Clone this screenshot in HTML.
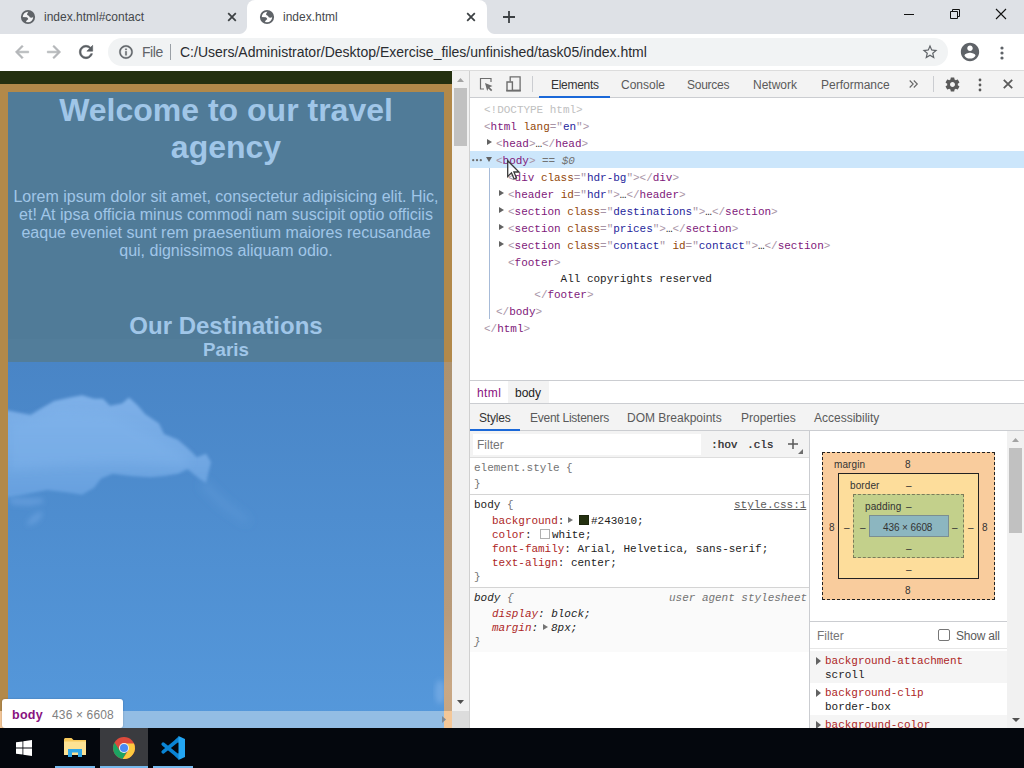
<!DOCTYPE html>
<html lang="en">
<head>
<meta charset="utf-8">
<title>index.html</title>
<style>
*{box-sizing:border-box;margin:0;padding:0}
html,body{width:1024px;height:768px;overflow:hidden;background:#fff}
body{position:relative;font-family:"Liberation Sans",sans-serif;font-size:12px;color:#333;line-height:1}
.a{position:absolute;white-space:pre}
svg{position:absolute;overflow:visible}
/* ---------- browser chrome ---------- */
#tabstrip{position:absolute;left:0;top:0;width:1024px;height:34px;background:#dee1e6}
#acttab{position:absolute;left:247px;top:0;width:240px;height:34px;background:#fff;border-radius:8px 8px 0 0}
#acttab:before,#acttab:after{content:"";position:absolute;bottom:0;width:8px;height:8px}
#acttab:before{left:-8px;background:radial-gradient(circle at 0 0,rgba(255,255,255,0) 7.5px,#fff 8.5px)}
#acttab:after{right:-8px;background:radial-gradient(circle at 100% 0,rgba(255,255,255,0) 7.5px,#fff 8.5px)}
.tabt{font-size:12px;color:#45484c;top:10px;line-height:14px}
#toolbar{position:absolute;left:0;top:34px;width:1024px;height:37px;background:#fff}
#omni{position:absolute;left:108px;top:38.400px;width:840px;height:28px;border-radius:14px;background:#f1f3f4}
.url{font-size:14px;top:43px;line-height:18px;color:#2a2c30}
/* ---------- page ---------- */
#page{position:absolute;left:0;top:71px;width:452px;height:640px;background:#243010;overflow:hidden}
#vscroll{position:absolute;left:452px;top:71px;width:17px;height:640px;background:#f1f1f1}
#hscroll{position:absolute;left:0;top:711px;width:469px;height:17px;background:#f1f1f1}
#page .hl{position:absolute;left:0;top:13px;width:452px;height:700px;background:#b2894a}
#page .ct{position:absolute;left:8px;top:21px;width:436px;height:700px;background:#507b98}
#page .tx{position:absolute;left:8px;width:436px;text-align:center;color:#a0c6e8;font-family:"Liberation Sans",sans-serif}
#page h1{font-size:32px;line-height:37px;font-weight:bold;top:21px}
#page p{font-size:16px;line-height:18px;top:116px}
#page h2{font-size:24px;line-height:28px;font-weight:bold;top:241px}
#page h3{font-size:18.72px;line-height:22px;font-weight:bold;top:268px}
#sky{position:absolute;left:8px;top:291px;width:444px;height:360px;background:linear-gradient(#4985c6,#5598db)}
/* ---------- devtools ---------- */
#devtools{position:absolute;left:469px;top:71px;width:555px;height:657px;background:#fff;border-left:1px solid #d0d0d0;overflow:hidden}
#dt-top{position:absolute;left:0;top:0;width:554px;height:27px;background:#f3f3f3;border-bottom:1px solid #cbcdd1}
.mono{font-family:"Liberation Mono",monospace;font-size:11px;line-height:16px}
.ui{font-family:"Liberation Sans",sans-serif;font-size:12px;line-height:14px;color:#333}
.row{position:absolute;left:0;height:16px;margin-top:1px;letter-spacing:-.025px;white-space:pre;font-family:"Liberation Mono",monospace;font-size:11px;line-height:16px;color:#a894a6}
.t{color:#80187a}.n{color:#93480a}.v{color:#1f1f9c}.k{color:#222}.g{color:#c0c0c0}
.tri{position:absolute;width:0;height:0;border-style:solid}
.tr{border-width:3.750px 0 3.750px 5.500px;margin-top:.75px;border-color:transparent transparent transparent #626262}
.td{border-width:5px 3.500px 0 3.500px;margin-top:1px;border-color:#626262 transparent transparent transparent}
.p{color:#ad2626}
/* ---------- taskbar ---------- */
#taskbar{position:absolute;left:0;top:728px;width:1024px;height:40px;background:#04070d}
</style>
</head>
<body>
<div id="tabstrip">
  <div id="acttab"></div>
  <svg style="left:20px;top:8.900px" width="16" height="16" viewBox="0 0 16 16"><circle cx="8" cy="8" r="6.150" fill="#fff" fill-opacity=".6" stroke="#5f6368" stroke-width="1.900"/><path fill="#5f6368" d="M8.800 2.200C7.600 3.400 6.900 4.800 7.200 6.100C8.200 6.300 9.200 7 9.700 8.300C10.900 8.900 12.200 8.700 13.400 8C13.800 5 11.800 2.400 8.800 2.200z"/><path fill="#5f6368" d="M2.200 8.100L6.800 8.300C7.800 8.800 8.300 9.500 8.200 10.200C7.200 10.800 6.400 11.600 6.100 12.800C5.900 13.200 5.400 13.400 5 13.300C3 12.300 2 10.200 2.200 8.100z"/></svg>
  <span class="a tabt" style="left:44px">index.html#contact</span>
  <svg style="left:227px;top:12px" width="10" height="10" viewBox="0 0 10 10"><path d="M1.200 1.200L8.800 8.800M8.800 1.200L1.200 8.800" stroke="#3c4043" stroke-width="1.750" fill="none"/></svg>
  <svg style="left:259px;top:8.900px" width="16" height="16" viewBox="0 0 16 16"><circle cx="8" cy="8" r="6.150" fill="#fff" fill-opacity=".6" stroke="#5f6368" stroke-width="1.900"/><path fill="#5f6368" d="M8.800 2.200C7.600 3.400 6.900 4.800 7.200 6.100C8.200 6.300 9.200 7 9.700 8.300C10.900 8.900 12.200 8.700 13.400 8C13.800 5 11.800 2.400 8.800 2.200z"/><path fill="#5f6368" d="M2.200 8.100L6.800 8.300C7.800 8.800 8.300 9.500 8.200 10.200C7.200 10.800 6.400 11.600 6.100 12.800C5.900 13.200 5.400 13.400 5 13.300C3 12.300 2 10.200 2.200 8.100z"/></svg>
  <span class="a tabt" style="left:283px">index.html</span>
  <svg style="left:466px;top:12px" width="10" height="10" viewBox="0 0 10 10"><path d="M1.200 1.200L8.800 8.800M8.800 1.200L1.200 8.800" stroke="#3c4043" stroke-width="1.750" fill="none"/></svg>
  <svg style="left:503px;top:11px" width="12" height="12" viewBox="0 0 12 12"><path d="M6 0v12M0 6h12" stroke="#3c4043" stroke-width="1.800" fill="none"/></svg>
  <!-- window controls -->
  <svg style="left:904px;top:9px" width="10" height="10" viewBox="0 0 10 10"><path d="M0 5.500h10" stroke="#111" stroke-width="1" fill="none"/></svg>
  <svg style="left:950px;top:9px" width="10" height="10" viewBox="0 0 10 10"><path d="M0.500 2.500h7v7h-7zM2.500 2.500v-2h7v7h-2" stroke="#111" stroke-width="1" fill="none"/></svg>
  <svg style="left:996px;top:9px" width="10" height="10" viewBox="0 0 10 10"><path d="M0 0l10 10M10 0L0 10" stroke="#111" stroke-width="1.100" fill="none"/></svg>
</div>
<div id="toolbar"></div>
<div class="a" style="left:452px;top:70px;width:572px;height:1px;background:#dcdcdc"></div>
<div id="omni"></div>
<svg style="left:12px;top:42px" width="20" height="20" viewBox="0 0 24 24"><path fill="#b4b6b9" stroke="#b4b6b9" stroke-width=".7" d="M20 11H7.830l5.590-5.590L12 4l-8 8 8 8 1.410-1.410L7.830 13H20v-2z"/></svg>
<svg style="left:44px;top:42px" width="20" height="20" viewBox="0 0 24 24"><path fill="#b4b6b9" stroke="#b4b6b9" stroke-width=".7" d="M12 4l-1.410 1.410L16.170 11H4v2h12.170l-5.580 5.590L12 20l8-8z"/></svg>
<svg style="left:76px;top:42px" width="20" height="20" viewBox="0 0 24 24"><path fill="#5a5e63" stroke="#5a5e63" stroke-width=".7" d="M17.650 6.350C16.200 4.900 14.210 4 12 4c-4.420 0-7.990 3.580-7.990 8s3.570 8 7.990 8c3.730 0 6.840-2.550 7.730-6h-2.080c-.82 2.330-3.040 4-5.650 4-3.310 0-6-2.690-6-6s2.690-6 6-6c1.660 0 3.140.69 4.220 1.780L13 11h7V4l-2.350 2.350z"/></svg>
<svg style="left:118px;top:44px" width="16" height="16" viewBox="0 0 24 24"><path fill="#5f6368" stroke="#5f6368" stroke-width=".5" d="M11 17h2v-6h-2v6zm1-15C6.480 2 2 6.480 2 12s4.480 10 10 10 10-4.480 10-10S17.520 2 12 2zm0 18c-4.410 0-8-3.590-8-8s3.590-8 8-8 8 3.590 8 8-3.590 8-8 8zM11 9h2V7h-2v2z"/></svg>
<span class="a url" style="left:142px;color:#5f6368;letter-spacing:-.45px">File</span>
<div class="a" style="left:170px;top:44px;width:1px;height:16px;background:#9aa0a6"></div>
<span class="a url" style="left:180px">C:/Users/Administrator/Desktop/Exercise_files/unfinished/task05/index.html</span>
<svg style="left:921px;top:43px" width="18" height="18" viewBox="0 0 24 24"><path fill="#5f6368" d="M22 9.240l-7.190-.62L12 2 9.190 8.630 2 9.240l5.460 4.730L5.820 21 12 17.270 18.180 21l-1.630-7.030L22 9.240zM12 15.400l-3.760 2.270 1-4.280-3.320-2.880 4.380-.38L12 6.100l1.710 4.040 4.380.38-3.320 2.880 1 4.280L12 15.400z"/></svg>
<svg style="left:959px;top:41px" width="22" height="22" viewBox="0 0 24 24"><path fill="#5f6368" d="M12 2C6.480 2 2 6.480 2 12s4.480 10 10 10 10-4.480 10-10S17.520 2 12 2zm0 3c1.660 0 3 1.340 3 3s-1.340 3-3 3-3-1.340-3-3 1.340-3 3-3zm0 14.200c-2.500 0-4.710-1.280-6-3.220.03-1.990 4-3.080 6-3.080 1.990 0 5.970 1.090 6 3.080-1.290 1.940-3.500 3.220-6 3.220z"/></svg>
<svg style="left:1000.400px;top:44.500px" width="4" height="16" viewBox="0 0 4 16"><circle cx="2" cy="3" r="1.600" fill="#5f6368"/><circle cx="2" cy="8" r="1.600" fill="#5f6368"/><circle cx="2" cy="13" r="1.600" fill="#5f6368"/></svg>
<div id="page">
  <div class="hl"></div>
  <div class="ct"></div>
  <div class="a" style="left:8px;top:268px;width:436px;height:23px;background:#527d9a"></div>
  <div class="tx" style="top:21px;font-size:32px;line-height:37px;font-weight:bold">Welcome to our travel<br>agency</div>
  <div class="tx" style="top:117px;font-size:16px;line-height:18px">Lorem ipsum dolor sit amet, consectetur adipisicing elit. Hic,<br>et! At ipsa officia minus commodi nam suscipit optio officiis<br>eaque eveniet sunt rem praesentium maiores recusandae<br>qui, dignissimos aliquam odio.</div>
  <div class="tx" style="top:241px;font-size:24px;line-height:28px;font-weight:bold">Our Destinations</div>
  <div class="tx" style="top:268px;font-size:18.72px;line-height:22px;font-weight:bold">Paris</div>
  <div id="sky"></div>
  <svg style="left:8px;top:291px" width="436" height="349" viewBox="8 362 436 349">
    <defs>
      <filter id="cb0" x="-20%" y="-20%" width="140%" height="140%"><feGaussianBlur stdDeviation="1.800"/></filter>
      <filter id="cb1" x="-20%" y="-20%" width="140%" height="140%"><feGaussianBlur stdDeviation="2.500"/></filter>
      <filter id="cb2" x="-30%" y="-30%" width="160%" height="160%"><feGaussianBlur stdDeviation="5"/></filter>
      <linearGradient id="cg" gradientUnits="userSpaceOnUse" x1="0" y1="395" x2="0" y2="498"><stop offset="0" stop-color="#80b2ea" stop-opacity=".95"/><stop offset=".55" stop-color="#7aaee8" stop-opacity=".85"/><stop offset="1" stop-color="#70a8e5" stop-opacity=".7"/></linearGradient>
      <clipPath id="skyclip"><rect x="8" y="362" width="436" height="349"/></clipPath>
    </defs>
    <g clip-path="url(#skyclip)">
      <path filter="url(#cb0)" fill="url(#cg)" d="M-4 410 L8 410.5 L30.5 415 L42 408 L54 401 L70 397.6 L82 395.2 L94 398.7 L103 398.7 L110 405.8 L122 403.4 L129 397.6 L138 405.8 L145 414 L159 423.4 L164 434 L178 439.8 L187.5 448 L197 457.3 L206 453.8 L211 462 L206 483 L199 478.4 L187.5 469 L178 473.7 L164 476 L150 477.3 L131 476 L112.5 473.7 L101 478.4 L94 487.8 L82 494.8 L68 492.5 L47 490 L23.4 494.8 L8 497.2 L-4 497z"/>
      <path filter="url(#cb2)" fill="#84b6ee" fill-opacity=".35" d="M10 425 L60 410 L110 415 L150 435 L190 458 L185 466 L120 462 L60 465 L10 470z"/>
      <path filter="url(#cb1)" fill="#6ea4e2" fill-opacity=".55" d="M8 497 L42 498 L44 503 L30 506 L12 505z M40 511 L43 514 L38 522 L28 526 L27 522 L33 515z"/>
      <path filter="url(#cb2)" fill="#6ea4e2" fill-opacity=".3" d="M205 480 L225 500 L250 520 L246 524 L220 506 L200 486z"/>
      <ellipse filter="url(#cb1)" fill="#8dbaee" fill-opacity=".45" cx="440" cy="692" rx="5" ry="12"/>
    </g>
  </svg>
  <div class="a" style="left:444px;top:291px;width:8px;height:360px;background:linear-gradient(#ad926f,#b99b7a 70%,#c9a885 90%,#c6a582)"></div>
</div>
<div id="vscroll">
  <div class="a" style="left:2px;top:17px;width:13px;height:58px;background:#c1c1c1"></div>
  <svg style="left:5px;top:7px" width="7" height="4" viewBox="0 0 7 4"><path d="M0 4L3.500 0L7 4z" fill="#a3a3a3"/></svg>
  <svg style="left:5px;top:629px" width="7" height="4" viewBox="0 0 7 4"><path d="M0 0L3.500 4L7 0z" fill="#505050"/></svg>
</div>
<div id="hscroll">
  <div class="a" style="left:0;top:0;width:8px;height:17px;background:#f4c798"></div>
  <div class="a" style="left:8px;top:0;width:436px;height:17px;background:#93bde4"></div>
  <div class="a" style="left:444px;top:0;width:8px;height:17px;background:#f4c798"></div>
  <div class="a" style="left:452px;top:0;width:17px;height:17px;background:#dcdcdc"></div>
  <svg style="left:442px;top:5px" width="4" height="7" viewBox="0 0 4 7"><path d="M0 0L4 3.500L0 7z" fill="#7d8a99"/></svg>
</div>
<div class="a" style="left:2px;top:699px;width:121px;height:29px;background:#fff;border-radius:3px;box-shadow:0 0 2px rgba(0,0,0,.25)"></div>
<span class="a" style="left:12px;top:706.500px;font-size:12.500px;line-height:16px;font-weight:bold;color:#881280;letter-spacing:.25px">body</span>
<span class="a" style="left:52px;top:706.500px;font-size:12px;line-height:16px;color:#808080;letter-spacing:.15px">436 × 6608</span>
<div id="devtools"></div>
<div id="dt" style="position:absolute;left:0;top:0;width:1024px;height:728px;overflow:hidden;pointer-events:none">
  <!-- top toolbar -->
  <div class="a" style="left:470px;top:71px;width:554px;height:27px;background:#f3f3f3;border-bottom:1px solid #cbcdd1"></div>
  <svg style="left:479px;top:77px" width="14" height="14" viewBox="0 0 14 14"><path d="M12 5V1.500H1.500V12H5" stroke="#6e6e6e" stroke-width="1.200" fill="none"/><path d="M6 6l7.500 3-3 1.200 2.800 2.800-1.200 1.200-2.800-2.800L8.200 14z" fill="#6e6e6e"/></svg>
  <svg style="left:506px;top:76px" width="16" height="16" viewBox="0 0 16 16"><path d="M4.200 5.500V0.900h9.900v13.600H7" stroke="#6e6e6e" stroke-width="1.300" fill="none"/><path d="M1 6h5.400v8.600H1z" stroke="#6e6e6e" stroke-width="1.400" fill="none"/><path d="M0.300 13.800h14.500v1.700H0.300z" fill="#6e6e6e"/></svg>
  <div class="a" style="left:532px;top:76px;width:1px;height:16px;background:#cbcdd1"></div>
  <span class="a ui" style="left:551px;top:78px;letter-spacing:-.3px">Elements</span>
  <div class="a" style="left:539px;top:96px;width:71px;height:2px;background:#1a68d8"></div>
  <span class="a ui" style="left:621px;top:78px;color:#5a5a5a">Console</span>
  <span class="a ui" style="left:687px;top:78px;color:#5a5a5a;letter-spacing:-.25px">Sources</span>
  <span class="a ui" style="left:753px;top:78px;color:#5a5a5a">Network</span>
  <span class="a ui" style="left:821px;top:78px;color:#5a5a5a">Performance</span>
  <svg style="left:909px;top:80.300px" width="9" height="8" viewBox="0 0 9 8"><path d="M0.700 0.500l3.500 3.500-3.500 3.500M4.800 0.500l3.500 3.500-3.500 3.500" stroke="#666" stroke-width="1.100" fill="none"/></svg>
  <div class="a" style="left:933px;top:76px;width:1px;height:16px;background:#cbcdd1"></div>
  <svg style="left:943.500px;top:76px" width="17" height="17" viewBox="0 0 24 24"><path fill="#5a5a5a" d="M19.430 12.980c.04-.32.07-.64.07-.98s-.03-.66-.07-.98l2.110-1.650c.19-.15.24-.42.120-.64l-2-3.460c-.12-.22-.39-.3-.61-.22l-2.490 1c-.52-.4-1.080-.73-1.690-.98l-.38-2.650C14.460 2.180 14.250 2 14 2h-4c-.25 0-.46.180-.49.420l-.38 2.650c-.61.250-1.170.59-1.690.98l-2.490-1c-.23-.09-.49 0-.61.220l-2 3.460c-.13.220-.07.49.12.640l2.110 1.650c-.04.320-.07.650-.07.980s.03.660.07.980l-2.110 1.650c-.19.150-.24.420-.12.640l2 3.460c.12.220.39.300.61.220l2.490-1c.52.400 1.080.73 1.690.98l.38 2.650c.03.240.24.420.49.420h4c.25 0 .46-.18.490-.42l.38-2.650c.61-.25 1.170-.59 1.690-.98l2.490 1c.23.090.49 0 .61-.22l2-3.460c.12-.22.070-.49-.12-.64l-2.110-1.650zM12 15.500c-1.930 0-3.500-1.570-3.500-3.500s1.570-3.500 3.500-3.500 3.500 1.570 3.500 3.500-1.570 3.500-3.500 3.500z"/></svg>
  <svg style="left:978.300px;top:77.600px" width="4" height="14" viewBox="0 0 4 14"><circle cx="2" cy="2" r="1.400" fill="#5a5a5a"/><circle cx="2" cy="7" r="1.400" fill="#5a5a5a"/><circle cx="2" cy="12" r="1.400" fill="#5a5a5a"/></svg>
  <svg style="left:1003.300px;top:79.300px" width="10" height="10" viewBox="0 0 10 10"><path d="M0.800 0.800l8.400 8.400M9.200 0.800L0.800 9.200" stroke="#5a5a5a" stroke-width="1.800" fill="none"/></svg>

  <!-- DOM tree -->
  <div class="a" style="left:470px;top:151px;width:554px;height:17px;background:#cce6fb"></div>
  <div class="a" style="left:489px;top:168px;width:1px;height:151px;background:#a7bbd8"></div>
  <div class="row" style="left:484px;top:101px"><span class="g">&lt;!DOCTYPE html&gt;</span></div>
  <div class="row" style="left:484px;top:118px">&lt;<span class="t">html</span> <span class="n">lang</span>="<span class="v">en</span>"&gt;</div>
  <div class="tri tr" style="left:487px;top:138px"></div>
  <div class="row" style="left:496px;top:135px">&lt;<span class="t">head</span>&gt;<span class="k">…</span>&lt;/<span class="t">head</span>&gt;</div>
  <svg style="left:472.300px;top:158.700px" width="10" height="2.400" viewBox="0 0 10 2.400"><circle cx="1.200" cy="1.200" r="1.150" fill="#6e6e6e"/><circle cx="5" cy="1.200" r="1.150" fill="#6e6e6e"/><circle cx="8.800" cy="1.200" r="1.150" fill="#6e6e6e"/></svg>
  <div class="tri td" style="left:486px;top:156px;border-width:5.500px 3.500px 0 3.500px"></div>
  <div class="row" style="left:496px;top:152px">&lt;<span class="t">body</span>&gt;<span style="color:#737373;font-style:italic"> == $0</span></div>
  <div class="row" style="left:508px;top:169px">&lt;<span class="t">div</span> <span class="n">class</span>="<span class="v">hdr-bg</span>"&gt;&lt;/<span class="t">div</span>&gt;</div>
  <div class="tri tr" style="left:499px;top:189px"></div>
  <div class="row" style="left:508px;top:186px">&lt;<span class="t">header</span> <span class="n">id</span>="<span class="v">hdr</span>"&gt;<span class="k">…</span>&lt;/<span class="t">header</span>&gt;</div>
  <div class="tri tr" style="left:499px;top:206px"></div>
  <div class="row" style="left:508px;top:203px">&lt;<span class="t">section</span> <span class="n">class</span>="<span class="v">destinations</span>"&gt;<span class="k">…</span>&lt;/<span class="t">section</span>&gt;</div>
  <div class="tri tr" style="left:499px;top:223px"></div>
  <div class="row" style="left:508px;top:220px">&lt;<span class="t">section</span> <span class="n">class</span>="<span class="v">prices</span>"&gt;<span class="k">…</span>&lt;/<span class="t">section</span>&gt;</div>
  <div class="tri tr" style="left:499px;top:240px"></div>
  <div class="row" style="left:508px;top:237px">&lt;<span class="t">section</span> <span class="n">class</span>="<span class="v">contact</span>" <span class="n">id</span>="<span class="v">contact</span>"&gt;<span class="k">…</span>&lt;/<span class="t">section</span>&gt;</div>
  <div class="row" style="left:508px;top:254px">&lt;<span class="t">footer</span>&gt;</div>
  <div class="row" style="left:508px;top:270px"><span class="k">        All copyrights reserved</span></div>
  <div class="row" style="left:508px;top:286px">    &lt;/<span class="t">footer</span>&gt;</div>
  <div class="row" style="left:496px;top:303px">&lt;/<span class="t">body</span>&gt;</div>
  <div class="row" style="left:484px;top:320px">&lt;/<span class="t">html</span>&gt;</div>

  <!-- breadcrumbs -->
  <div class="a" style="left:470px;top:380px;width:554px;height:24px;background:#fff;border-top:1px solid #cbcdd1;border-bottom:1px solid #cbcdd1"></div>
  <div class="a" style="left:508px;top:381px;width:41px;height:22px;background:#f3f3f3"></div>
  <span class="a ui" style="left:477px;top:386px;color:#881280;letter-spacing:.4px">html</span>
  <span class="a ui" style="left:515px;top:386px;color:#222">body</span>
  <!-- styles tabs -->
  <div class="a" style="left:470px;top:404px;width:554px;height:27px;background:#f3f3f3;border-bottom:1px solid #cbcdd1"></div>
  <div class="a" style="left:470px;top:429px;width:50px;height:2px;background:#1a68d8"></div>
  <span class="a ui" style="left:479px;top:411px;letter-spacing:-.2px">Styles</span>
  <span class="a ui" style="left:530px;top:411px;color:#5a5a5a;letter-spacing:-.25px">Event Listeners</span>
  <span class="a ui" style="left:627px;top:411px;color:#5a5a5a">DOM Breakpoints</span>
  <span class="a ui" style="left:741px;top:411px;color:#5a5a5a">Properties</span>
  <span class="a ui" style="left:814px;top:411px;color:#5a5a5a">Accessibility</span>
  <!-- filter row -->
  <div class="a" style="left:470px;top:431px;width:339px;height:27px;background:#f3f3f3;border-bottom:1px solid #ddd"></div>
  <div class="a" style="left:473px;top:434px;width:228px;height:21px;background:#fff"></div>
  <span class="a ui" style="left:477px;top:438px;color:#757575">Filter</span>
  <span class="a mono" style="left:711px;top:437px;color:#3f3f3f;text-shadow:.3px 0 0 #3f3f3f">:hov</span>
  <span class="a mono" style="left:747px;top:437px;color:#3f3f3f;text-shadow:.3px 0 0 #3f3f3f">.cls</span>
  <svg style="left:788px;top:439px" width="10" height="10" viewBox="0 0 10 10"><path d="M5 0v10M0 5h10" stroke="#5a5a5a" stroke-width="1.500" fill="none"/></svg>
  <svg style="left:798px;top:449px" width="5" height="5" viewBox="0 0 5 5"><path d="M5 0v5H0z" fill="#6e6e6e"/></svg>
  <div class="a" style="left:809px;top:431px;width:1px;height:297px;background:#cbcdd1"></div>
  <!-- styles -->
  <div class="row" style="left:474px;top:459px;color:#737373">element.style {</div>
  <div class="row" style="left:474px;top:475px;color:#737373">}</div>
  <div class="a" style="left:470px;top:494px;width:339px;height:1px;background:#d4d4d4"></div>
  <div class="row" style="left:474px;top:496px;color:#222">body <span style="color:#737373">{</span></div>
  <div class="row" style="left:734px;top:496px;color:#5a5a5a;text-decoration:underline">style.css:1</div>
  <div class="row" style="left:492px;top:512px;color:#222"><span class="p">background</span>: </div>
  <div class="tri tr" style="left:568px;top:516px;border-color:transparent transparent transparent #747474"></div>
  <div class="a" style="left:579px;top:515px;width:10px;height:10px;background:#243010;border:1px solid #1d260d"></div>
  <div class="row" style="left:591px;top:512px;color:#222">#243010;</div>
  <div class="row" style="left:492px;top:526px;color:#222"><span class="p">color</span>: </div>
  <div class="a" style="left:540px;top:529px;width:10px;height:10px;background:#fff;border:1px solid #b0b0b0"></div>
  <div class="row" style="left:552px;top:526px;color:#222">white;</div>
  <div class="row" style="left:492px;top:540px;color:#222"><span class="p">font-family</span>: Arial, Helvetica, sans-serif;</div>
  <div class="row" style="left:492px;top:554px;color:#222"><span class="p">text-align</span>: center;</div>
  <div class="row" style="left:474px;top:568px;color:#737373">}</div>
  <div class="a" style="left:470px;top:587px;width:339px;height:65px;background:#fafafa;border-top:1px solid #d4d4d4"></div>
  <div class="row" style="left:474px;top:589px;color:#222;font-style:italic">body <span style="color:#737373">{</span></div>
  <div class="row" style="left:669px;top:589px;color:#737373;font-style:italic">user agent stylesheet</div>
  <div class="row" style="left:492px;top:605px;color:#222;font-style:italic"><span class="p">display</span>: block;</div>
  <div class="row" style="left:492px;top:619px;color:#222;font-style:italic"><span class="p">margin</span>: </div>
  <div class="tri tr" style="left:543px;top:623px;border-color:transparent transparent transparent #747474"></div>
  <div class="row" style="left:551px;top:619px;color:#222;font-style:italic">8px;</div>
  <div class="row" style="left:474px;top:633px;color:#737373;font-style:italic">}</div>
  <!-- styles pane scroll arrows -->
  <svg style="left:1012px;top:438px" width="7" height="4" viewBox="0 0 7 4"><path d="M0 4L3.500 0L7 4z" fill="#a3a3a3"/></svg>

  <!-- computed: box model -->
  <div class="a" style="left:1007px;top:431px;width:17px;height:297px;background:#f1f1f1"></div>
  <div class="a" style="left:1009px;top:448px;width:13px;height:85px;background:#c1c1c1"></div>
  <svg style="left:1012px;top:438px" width="7" height="4" viewBox="0 0 7 4"><path d="M0 4L3.500 0L7 4z" fill="#a3a3a3"/></svg>
  <svg style="left:1011.500px;top:717.500px" width="8" height="4" viewBox="0 0 8 4"><path d="M0 0L4 4L8 0z" fill="#505050"/></svg>
  <div class="a" style="left:822px;top:452px;width:173px;height:148px;background:#f9cc9d;border:1px dashed #222"></div>
  <div class="a" style="left:838px;top:473px;width:141px;height:106px;background:#fddd9b;border:1px solid #222"></div>
  <div class="a" style="left:853px;top:494px;width:111px;height:64px;background:#c3d08b;border:1px dashed #7b7b5a"></div>
  <div class="a" style="left:869px;top:515px;width:80px;height:22px;background:#8cb6c0;border:1px solid #7b8e92"></div>
  <span class="a ui" style="left:834px;top:457px;font-size:10px;color:#333;letter-spacing:.1px;margin-top:.6px">margin</span>
  <span class="a ui" style="left:905px;top:457px;font-size:10px;color:#333;letter-spacing:.1px;margin-top:.6px">8</span>
  <span class="a ui" style="left:850px;top:478px;font-size:10px;color:#333;letter-spacing:.1px;margin-top:.6px">border</span>
  <span class="a ui" style="left:906px;top:478px;font-size:10px;color:#333;letter-spacing:.1px;margin-top:.6px">–</span>
  <span class="a ui" style="left:865px;top:499px;font-size:10px;color:#333;letter-spacing:.1px;margin-top:.6px">padding</span>
  <span class="a ui" style="left:906px;top:499px;font-size:10px;color:#333;letter-spacing:.1px;margin-top:.6px">–</span>
  <span class="a ui" style="left:883px;top:520px;font-size:10px;color:#333;letter-spacing:.1px;margin-top:.6px;letter-spacing:-.1px">436 × 6608</span>
  <span class="a ui" style="left:829px;top:520px;font-size:10px;color:#333;letter-spacing:.1px;margin-top:.6px">8</span>
  <span class="a ui" style="left:844px;top:520px;font-size:10px;color:#333;letter-spacing:.1px;margin-top:.6px">–</span>
  <span class="a ui" style="left:860px;top:520px;font-size:10px;color:#333;letter-spacing:.1px;margin-top:.6px">–</span>
  <span class="a ui" style="left:952px;top:520px;font-size:10px;color:#333;letter-spacing:.1px;margin-top:.6px">–</span>
  <span class="a ui" style="left:968px;top:520px;font-size:10px;color:#333;letter-spacing:.1px;margin-top:.6px">–</span>
  <span class="a ui" style="left:982px;top:520px;font-size:10px;color:#333;letter-spacing:.1px;margin-top:.6px">8</span>
  <span class="a ui" style="left:906px;top:541px;font-size:10px;color:#333;letter-spacing:.1px;margin-top:.6px">–</span>
  <span class="a ui" style="left:906px;top:562px;font-size:10px;color:#333;letter-spacing:.1px;margin-top:.6px">–</span>
  <span class="a ui" style="left:905px;top:583px;font-size:10px;color:#333;letter-spacing:.1px;margin-top:.6px">8</span>
  <!-- computed filter -->
  <div class="a" style="left:810px;top:621px;width:197px;height:28px;background:#fff;border-top:1px solid #cbcdd1;border-bottom:1px solid #e6e6e6"></div>
  <span class="a ui" style="left:817px;top:629px;color:#757575">Filter</span>
  <div class="a" style="left:938px;top:629px;width:12px;height:12px;background:#fff;border:1px solid #767676;border-radius:2px"></div>
  <span class="a ui" style="left:956px;top:629px;color:#5a5a5a;letter-spacing:-.2px">Show all</span>
  <!-- computed props -->
  <div class="a" style="left:810px;top:651px;width:197px;height:32px;background:#f5f5f5"></div>
  <div class="a" style="left:810px;top:715px;width:197px;height:13px;background:#f5f5f5"></div>
  <div class="tri tr" style="left:816px;top:656px;border-width:4px 0 4px 5.500px"></div>
  <div class="row" style="left:825px;top:652px"><span class="p">background-attachment</span></div>
  <div class="row" style="left:825px;top:666px;color:#222">scroll</div>
  <div class="tri tr" style="left:816px;top:688px;border-width:4px 0 4px 5.500px"></div>
  <div class="row" style="left:825px;top:684px"><span class="p">background-clip</span></div>
  <div class="row" style="left:825px;top:698px;color:#222">border-box</div>
  <div class="tri tr" style="left:816px;top:720px;border-width:4px 0 4px 5.500px"></div>
  <div class="row" style="left:825px;top:716px"><span class="p">background-color</span></div>
  <!-- mouse cursor -->
  <svg style="left:507px;top:160px" width="13" height="21" viewBox="0 0 13 21"><path d="M0.700 0.700V16.500l3.800-3.600 2.600 6.100 2.400-1-2.600-6H12z" fill="#fff" fill-opacity=".55" stroke="#3a3a3a" stroke-width="1.300"/></svg>
</div>
<div id="taskbar">
  <div class="a" style="left:100px;top:0;width:48px;height:40px;background:#3a3b3f"></div>
  <div class="a" style="left:55px;top:38px;width:40px;height:2px;background:#76b9ed"></div>
  <div class="a" style="left:100px;top:38px;width:48px;height:2px;background:#76b9ed"></div>
  <div class="a" style="left:153px;top:38px;width:40px;height:2px;background:#76b9ed"></div>
  <!-- windows logo -->
  <svg style="left:16px;top:12px" width="16" height="16" viewBox="0 0 16 16"><path fill="#fff" d="M0 2.300L6.500 1.400V7.600H0zM7.300 1.300L16 0V7.600H7.300zM0 8.400H6.500V14.600L0 13.700zM7.300 8.400H16V16L7.300 14.700z"/></svg>
  <!-- explorer -->
  <svg style="left:64px;top:10px" width="22" height="19" viewBox="0 0 22 19"><path fill="#f7c95c" d="M0 1.500C0 .7.700 0 1.500 0h6l2 2H22v15H0z"/><path fill="#fde293" d="M0 3.500h22V17H0z"/><path fill="#31a8e8" d="M4 11h14v8h-4v-4.500H8V19H4z"/></svg>
  <!-- chrome -->
  <svg style="left:113px;top:9px" width="22" height="22" viewBox="0 0 22 22"><circle cx="11" cy="11" r="11" fill="#dc4a3c"/><path fill="#1da362" d="M1.500 5.500A11 11 0 0 0 9.700 21.900L14.500 13.500 11 11 6.700 13.500z"/><path fill="#fdc93f" d="M9.700 21.900A11 11 0 0 0 21 6.500H11L15.300 13.500z"/><circle cx="11" cy="11" r="5" fill="#f1f1f1"/><circle cx="11" cy="11" r="4" fill="#4a8af4"/></svg>
  <!-- vscode -->
  <svg style="left:161px;top:8px" width="24" height="24" viewBox="0 0 24 24"><path d="M17.500 3.500L2.200 15.800M17.500 20.500L2.200 8.200" stroke="#0a84d4" stroke-width="3.600" stroke-linecap="round" fill="none"/><path fill="#0a84d4" d="M17.800 0.300L13.500 4.500 17.800 7z M17.800 23.700L13.500 19.500 17.800 17z"/><path fill="#23a5f2" d="M17.500 0L24 3v18l-6.500 3z"/></svg>
</div>
</body>
</html>
